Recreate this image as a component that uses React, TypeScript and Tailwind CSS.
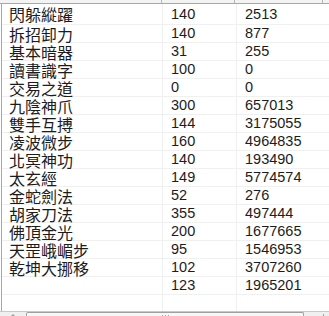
import React from 'react';

type Row = { name: string; level: string; exp: string };

const rows: Row[] = [
  { name: '閃躲縱躍', level: '140', exp: '2513' },
  { name: '拆招卸力', level: '140', exp: '877' },
  { name: '基本暗器', level: '31', exp: '255' },
  { name: '讀書識字', level: '100', exp: '0' },
  { name: '交易之道', level: '0', exp: '0' },
  { name: '九陰神爪', level: '300', exp: '657013' },
  { name: '雙手互搏', level: '144', exp: '3175055' },
  { name: '凌波微步', level: '160', exp: '4964835' },
  { name: '北冥神功', level: '140', exp: '193490' },
  { name: '太玄經', level: '149', exp: '5774574' },
  { name: '金蛇劍法', level: '52', exp: '276' },
  { name: '胡家刀法', level: '355', exp: '497444' },
  { name: '佛頂金光', level: '200', exp: '1677665' },
  { name: '天罡峨嵋步', level: '95', exp: '1546953' },
  { name: '乾坤大挪移', level: '102', exp: '3707260' },
  { name: '', level: '123', exp: '1965201' },
  { name: '', level: '', exp: '' },
];

const cjk = { fontFamily: '"Noto Sans CJK TC", "Noto Sans", sans-serif' };
const num = { fontFamily: '"Liberation Sans", Arial, sans-serif' };

function DataRow({ row, first }: { row: Row; first: boolean }) {
  return (
    <div
      className={`flex shrink-0 border-b border-[#f0f0f0] ${first ? 'h-[21px]' : 'h-[18px]'}`}
    >
      <div
        className="flex w-[160px] items-center pl-[7px] text-[16px] leading-none text-[#1c1c1c]"
        style={cjk}
      >
        {row.name}
      </div>
      <div
        className="flex w-[74px] items-center border-l border-[#f0f0f0] pl-[8px] text-[14.5px] leading-none text-[#1c1c1c]"
        style={num}
      >
        {row.level}
      </div>
      <div
        className="flex w-[86px] items-center border-l border-[#f0f0f0] pl-[8px] text-[14.5px] leading-none text-[#1c1c1c]"
        style={num}
      >
        {row.exp}
      </div>
    </div>
  );
}

export default function App() {
  return (
    <div className="flex h-[316px] w-[329px] flex-col overflow-hidden bg-white">
      {/* clipped header */}
      <div className="flex h-[4px] shrink-0 border-b border-[#a8a8a8] bg-[#f3f3f3]">
        <div className="w-[162px] border-r border-[#b8b8b8]" />
        <div className="w-[73px] border-r border-[#b8b8b8]" />
        <div className="w-[88px] border-r border-[#b8b8b8]" />
        <div className="flex-1" />
      </div>

      <div className="flex min-h-0 flex-1 pl-[1px]">
        <div className="flex flex-1 flex-col overflow-hidden border-l border-[#a8a8a8]">
          {rows.map((r, i) => (
            <DataRow key={i} row={r} first={i === 0} />
          ))}
        </div>
      </div>

      {/* horizontal scrollbar */}
      <div className="flex h-[5px] shrink-0 border-t border-[#c8c8c8] bg-[#f0f0f0]">
        <div className="flex w-[26px] justify-center">
          <div className="mt-[2px] h-0 w-0 border-x-[3px] border-b-[3px] border-x-transparent border-b-[#a0a0a0]" />
        </div>
        <div className="flex w-[278px] justify-center gap-[2px] rounded-t-[2px] border-x border-t border-[#a0a0a0] bg-[#f7f7f7] pt-[2px]">
          <div className="h-[3px] w-px bg-[#a0a0a0]" />
          <div className="h-[3px] w-px bg-[#a0a0a0]" />
          <div className="h-[3px] w-px bg-[#a0a0a0]" />
        </div>
        <div className="flex flex-1 justify-end pr-[5px]">
          <div className="mt-[2px] h-[3px] w-px bg-[#a0a0a0]" />
        </div>
      </div>
    </div>
  );
}
